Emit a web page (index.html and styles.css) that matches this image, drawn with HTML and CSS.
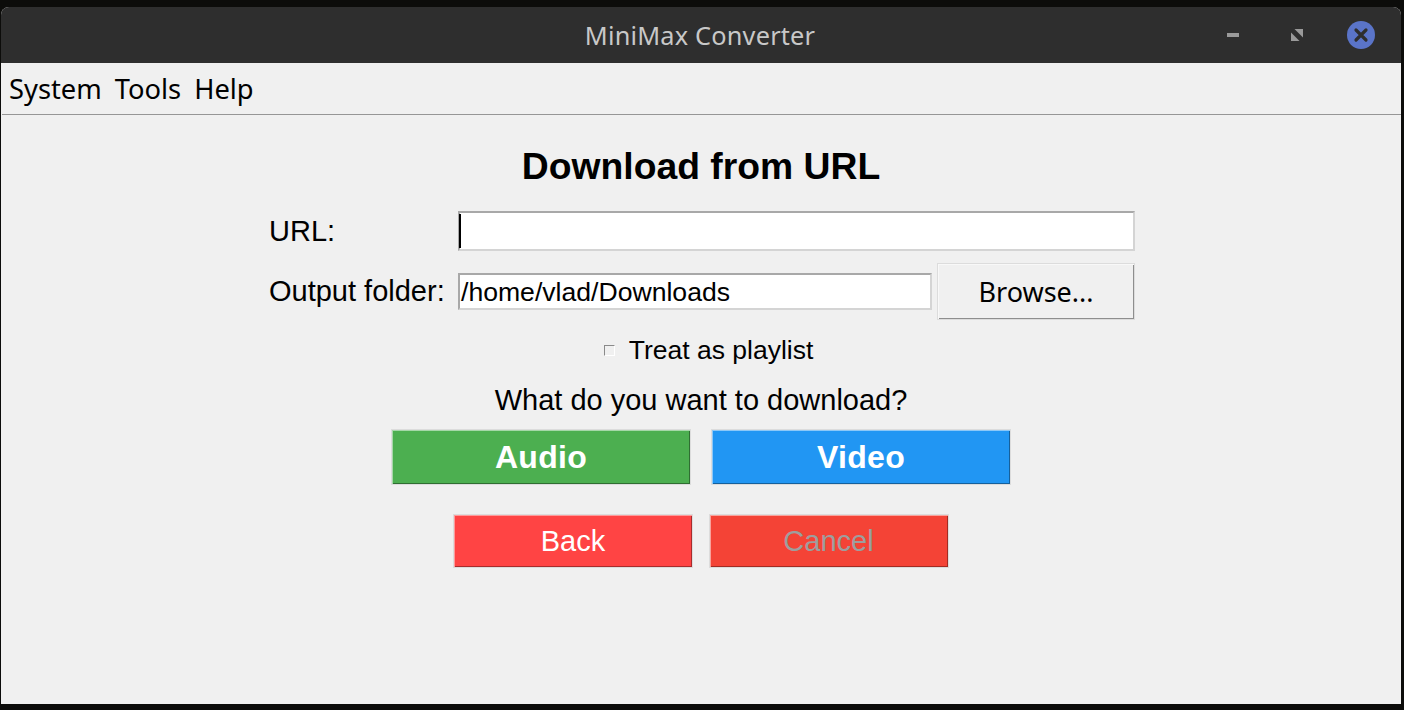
FILE: index.html
```html
<!DOCTYPE html>
<html lang="en">
<head>
<meta charset="utf-8">
<title>MiniMax Converter</title>
<link rel="stylesheet" href="styles.css">
</head>
<body>
<div class="window">
  <header class="titlebar">
    <div class="title">MiniMax Converter</div>
    <div class="controls">
      <svg class="ctl" width="14" height="14" viewBox="0 0 14 14"><rect x="1" y="5" width="12" height="4" fill="#9a9a9a"/></svg>
      <svg class="ctl" width="14" height="14" viewBox="0 0 14 14"><path d="M1 4.5V13H9.5Z" fill="#9a9a9a"/><path d="M4.5 1H13V9.5Z" fill="#9a9a9a"/></svg>
      <svg class="close" width="28" height="28" viewBox="0 0 28 28"><circle cx="14" cy="14" r="14" fill="#5a74c8"/><path d="M9 9L19 19M19 9L9 19" stroke="#2e2e2e" stroke-width="3.2" stroke-linecap="round"/></svg>
    </div>
  </header>
  <nav class="menubar">
    <span class="menu">System</span>
    <span class="menu">Tools</span>
    <span class="menu">Help</span>
  </nav>
  <main class="content">
    <h1 class="heading">Download from URL</h1>
    <div class="form">
      <div class="row row-url">
        <label class="label">URL:</label>
        <div class="field field-url"><span class="caret"></span></div>
      </div>
      <div class="row row-out">
        <label class="label">Output folder:</label>
        <div class="field field-out">/home/vlad/Downloads</div>
        <button class="browse">Browse...</button>
      </div>
    </div>
    <div class="check-row"><span class="check"></span><span class="check-text">Treat as playlist</span></div>
    <p class="question">What do you want to download?</p>
    <div class="choices">
      <button class="btn big green">Audio</button>
      <button class="btn big blue">Video</button>
    </div>
    <div class="actions">
      <button class="btn small back">Back</button>
      <button class="btn small cancel">Cancel</button>
    </div>
  </main>
</div>
</body>
</html>
```
FILE: styles.css
```css
* { box-sizing: border-box; }
html, body { height: 100%; }
body {
  margin: 0;
  background: #0c0c0a;
  overflow: hidden;
  font-family: "Liberation Sans", Arial, sans-serif;
  color: #000;
}
.window {
  margin: 7px 3px 0 1px;
  height: 697px;
  background: #f0f0f0;
  border-radius: 8px 8px 0 0;
  overflow: hidden;
  display: flex;
  flex-direction: column;
}
.titlebar {
  height: 56px;
  flex: none;
  background: #2e2e2e;
  display: flex;
  align-items: center;
  justify-content: center;
  position: relative;
}
.title {
  font-family: "Noto Sans", sans-serif;
  font-size: 25.3px;
  color: #c8c8c8;
  letter-spacing: 0.2px;
  margin-left: -2px;
}
.controls {
  position: absolute;
  top: 14px;
  left: 1225px;
  display: flex;
  align-items: center;
  gap: 50px;
  height: 28px;
}
.ctl { display: block; }
.close { display: block; margin-left: -7px; }
.menubar {
  height: 52px;
  flex: none;
  margin-left: 1px;
  border-bottom: 1px solid #969696;
  display: flex;
  align-items: center;
  gap: 13px;
  padding: 0 0 0 7px;
  font-family: "Noto Sans", sans-serif;
  font-size: 27.3px;
}
.content {
  flex: 1;
  display: flex;
  flex-direction: column;
  align-items: center;
}
.heading {
  margin: 30px 0 0;
  font-size: 37.3px;
  line-height: 42px;
  font-weight: 700;
}
.form {
  width: 866px;
  margin: 24px 0 0 2px;
  display: flex;
  flex-direction: column;
  gap: 12px;
}
.row { display: flex; align-items: center; }
.label {
  width: 189px;
  font-size: 29px;
  flex: none;
}
.field {
  background: #fff;
  border: 2px solid;
  border-color: #a8a8a8 #d4d4d4 #d4d4d4 #a8a8a8;
  font-size: 26.6px;
  display: flex;
  align-items: center;
}
.field-url { width: 677px; height: 40px; }
.field-out { width: 474px; height: 37px; padding: 1px 0 0 1px; }
.caret { width: 2px; height: 34px; margin-left: -1px; background: #000; }
.browse {
  margin-left: 5px;
  width: 198px;
  height: 57px;
  background: #f0f0f0;
  border: 1px solid #dcdcdc;
  box-shadow: inset 1px 1px 0 #f8f8f8, inset -1px -1px 0 #8e8e8e;
  font-family: "Noto Sans", sans-serif;
  font-size: 27px;
  color: #000;
  padding: 0;
}
.check-row {
  margin: 14px 0 0 15px;
  display: flex;
  align-items: center;
  gap: 14px;
  height: 32px;
}
.check {
  width: 11px;
  height: 11px;
  background: #f0f0f0;
  border: 1px solid;
  border-color: #8a8a8a #fff #fff #8a8a8a;
}
.check-text { font-size: 26.5px; }
.question {
  margin: 17px 0 0 0;
  font-size: 29px;
  line-height: 34px;
}
.choices {
  margin: 12px 0 0 -1px;
  display: flex;
  gap: 20px;
}
.btn {
  padding: 0;
  border: 1px solid #dcdcdc;
  font-family: "Liberation Sans", Arial, sans-serif;
}
.big {
  width: 300px;
  height: 56px;
  padding-left: 1px;
  font-size: 32px;
  font-weight: 700;
  color: #fff;
  letter-spacing: 0.3px;
}
.green { background: #4caf50; box-shadow: inset 1px 1px 0 #a5d8a8, inset -1px -1px 0 #2f6e32; }
.blue { background: #2196f3; box-shadow: inset 1px 1px 0 #8cc8f8, inset -1px -1px 0 #15609c; }
.actions {
  margin: 29px 0 0 0;
  display: flex;
  gap: 16px;
}
.small {
  width: 240px;
  height: 54px;
  font-size: 29px;
}
.back { background: #ff4444; color: #fff; box-shadow: inset 1px 1px 0 #ff9a9a, inset -1px -1px 0 #a82c2c; }
.cancel { background: #f44336; color: #9e9e9e; padding-right: 1px; box-shadow: inset 1px 1px 0 #f9a39c, inset -1px -1px 0 #a32b22; }
```
